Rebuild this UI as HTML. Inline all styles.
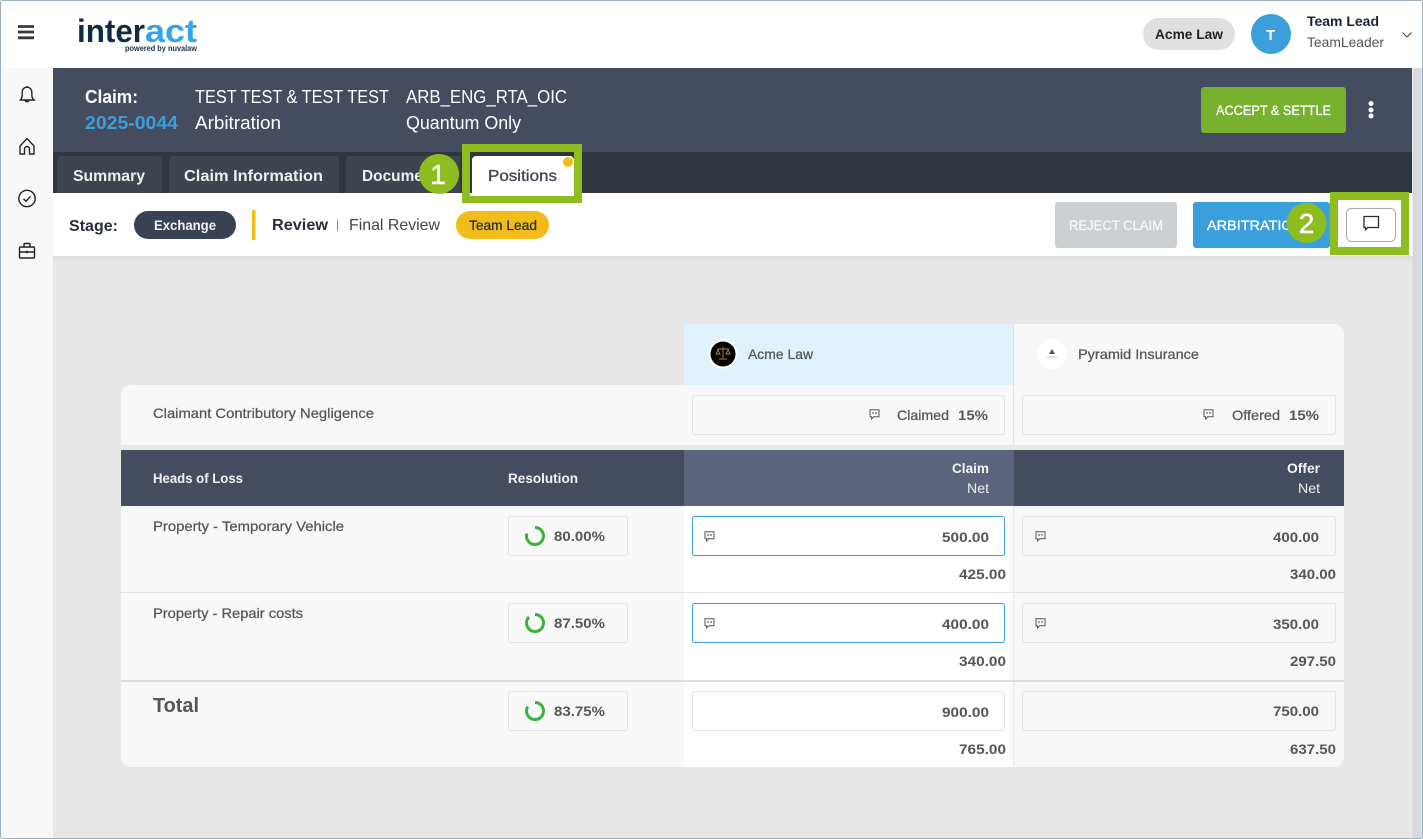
<!DOCTYPE html>
<html lang="en"><head><meta charset="utf-8"><title>Positions</title>
<style>
html,body{margin:0;padding:0;background:#fff;width:1423px;height:839px;overflow:hidden}
svg{display:block}
text{font-family:"Liberation Sans",sans-serif;white-space:pre}
.b{font-weight:700}
.g{fill:#555}
.m{stroke:#555;stroke-width:.25}
.w{stroke:#fff;stroke-width:.3}
</style></head><body>
<svg xmlns="http://www.w3.org/2000/svg" width="1423" height="839" viewBox="0 0 1423 839">
<defs>
<linearGradient id="sh" x1="0" y1="0" x2="0" y2="1"><stop offset="0" stop-color="#dcdcdc"/><stop offset="1" stop-color="#e8e8e8"/></linearGradient>
<symbol id="cm" viewBox="0 0 11 11" overflow="visible"><path d="M1 .8h9v7H4.600L2.600 10V7.800H1z" fill="none" stroke="#555" stroke-width="1"/><path d="M4 3v2M7 3v2" stroke="#555" stroke-width="1.100"/></symbol>
</defs>
<rect width="1423" height="839" fill="#fff"/>
<rect x="0" y="68" width="53" height="771" fill="#f8f8f8"/>
<rect x="53" y="256" width="1360" height="583" fill="#e8e8e8"/>
<rect x="1413" y="68" width="10" height="771" fill="#e9e9e9"/>
<rect x="1412.500" y="68" width="9" height="771" rx="3" fill="#d6d8db"/>
<rect x="53" y="68" width="1359" height="84" fill="#464c5f"/>
<rect x="53" y="152" width="1359" height="41" fill="#30363f"/>
<rect x="53" y="193" width="1359" height="63" fill="#fff"/>
<rect x="53" y="256" width="1359" height="7" fill="url(#sh)"/>

<!-- top bar -->
<path d="M18 26.500h16M18 32h16M18 37.800h16" stroke="#3a3a3a" stroke-width="2.800"/>
<text x="77" y="42" font-size="32" class="b" fill="#0f2c44" textLength="68" lengthAdjust="spacingAndGlyphs">inter</text>
<text x="145" y="42" font-size="32" class="b" fill="#35a4ee" textLength="52" lengthAdjust="spacingAndGlyphs">act</text>
<text x="125" y="51" font-size="8.500" class="b" fill="#1d3347" textLength="72" lengthAdjust="spacingAndGlyphs">powered by nuvalaw</text>
<rect x="1143" y="18" width="92" height="32" rx="16" fill="#e0e0e0"/>
<text x="1155" y="39" font-size="14" class="b" fill="#222" textLength="68" lengthAdjust="spacingAndGlyphs">Acme Law</text>
<circle cx="1271" cy="34" r="20" fill="#3a9fdc"/>
<text x="1266" y="40" font-size="15" class="b" fill="#fff">T</text>
<text x="1307" y="26" font-size="14" class="b" fill="#1a2233" textLength="72" lengthAdjust="spacingAndGlyphs">Team Lead</text>
<text x="1307" y="47" font-size="14" fill="#555" textLength="77" lengthAdjust="spacingAndGlyphs">TeamLeader</text>
<path d="M1402.500 32.500l4.500 4.500 4.500-4.500" fill="none" stroke="#444" stroke-width="1.100"/>

<!-- sidebar icons -->
<g fill="none" stroke="#222" stroke-width="1.400">
<path d="M20.500 100h13.500c-1.800-1.500-2.200-3-2.200-5.500v-2.500a4.800 4.800 0 0 0-9.600 0v2.500c0 2.500-.4 4-1.700 5.500zM25 100.500a2.300 2.300 0 0 0 4 0M27 86v1.500"/>
<path d="M20 146l7-7.500 7 7.500v8h-4.500v-5a2.500 2.500 0 0 0-5 0v5H20z"/>
<circle cx="27" cy="198.500" r="8.200"/><path d="M23.500 198.800l2.500 2.500 4.500-5"/>
<rect x="19.500" y="247" width="15" height="11" rx="1"/><path d="M24 247v-2.500a1 1 0 0 1 1-1h4a1 1 0 0 1 1 1v2.500M19.500 252h15"/><path d="M26.300 252h1.400" stroke-width="2.500"/>
</g>

<!-- claim header -->
<text x="85" y="103" font-size="18" class="b" fill="#fff" textLength="53" lengthAdjust="spacingAndGlyphs">Claim:</text>
<text x="85" y="129" font-size="18" class="b" fill="#3a9fdc" textLength="93" lengthAdjust="spacingAndGlyphs">2025-0044</text>
<text x="195" y="103" font-size="18" fill="#fff" textLength="194" lengthAdjust="spacingAndGlyphs">TEST TEST &amp; TEST TEST</text>
<text x="195" y="129" font-size="18" fill="#fff" textLength="86" lengthAdjust="spacingAndGlyphs">Arbitration</text>
<text x="406" y="103" font-size="18" fill="#fff" textLength="161" lengthAdjust="spacingAndGlyphs">ARB_ENG_RTA_OIC</text>
<text x="406" y="129" font-size="18" fill="#fff" textLength="115" lengthAdjust="spacingAndGlyphs">Quantum Only</text>
<rect x="1201" y="87" width="145" height="46" rx="3" fill="#76b22e"/>
<text x="1216" y="115" font-size="14" fill="#fff" class="w" textLength="115" lengthAdjust="spacingAndGlyphs">ACCEPT &amp; SETTLE</text>
<circle cx="1371" cy="103.500" r="2.500" fill="#fff"/><circle cx="1371" cy="110" r="2.500" fill="#fff"/><circle cx="1371" cy="116" r="2.500" fill="#fff"/>

<!-- tabs -->
<path d="M57 193v-33a4 4 0 0 1 4-4h97a4 4 0 0 1 4 4v33z" fill="#3d444e"/>
<path d="M169 193v-33a4 4 0 0 1 4-4h162a4 4 0 0 1 4 4v33z" fill="#3d444e"/>
<path d="M346 193v-33a4 4 0 0 1 4-4h110v37z" fill="#3d444e"/>
<text x="73" y="181" font-size="16" class="b" fill="#f1f1f1" textLength="72" lengthAdjust="spacingAndGlyphs">Summary</text>
<text x="184" y="181" font-size="16" class="b" fill="#f1f1f1" textLength="139" lengthAdjust="spacingAndGlyphs">Claim Information</text>
<text x="362" y="181" font-size="16" class="b" fill="#f1f1f1" textLength="84" lengthAdjust="spacingAndGlyphs">Documents</text>
<rect x="462" y="144" width="120" height="59" fill="#8ebd20"/>
<rect x="470" y="152" width="104" height="44" fill="#30363f"/>
<path d="M472 196v-36a4 4 0 0 1 4-4h94a4 4 0 0 1 4 4v34h-102z" fill="#fff"/>
<rect x="470" y="193" width="104" height="3" fill="#fff"/>
<text x="488" y="181" font-size="16" fill="#3f4450" stroke="#3f4450" stroke-width=".3" textLength="69" lengthAdjust="spacingAndGlyphs">Positions</text>
<circle cx="568" cy="162" r="5" fill="#f2bd1a"/>
<circle cx="439" cy="174" r="20" fill="#8ebd20"/>
<text x="438" y="184" font-size="28" fill="#fff" stroke="#fff" stroke-width=".5" text-anchor="middle">1</text>

<!-- stage bar -->
<text x="69" y="231" font-size="15.500" class="b" fill="#2a2f3a" textLength="49" lengthAdjust="spacingAndGlyphs">Stage:</text>
<rect x="134" y="211" width="102" height="28" rx="14" fill="#3a4152"/>
<text x="154" y="230" font-size="14" class="b" fill="#f4f4f4" textLength="62" lengthAdjust="spacingAndGlyphs">Exchange</text>
<rect x="252" y="210" width="3.500" height="30" fill="#f2bd1a"/>
<text x="272" y="230" font-size="16" class="b" fill="#2a2f3a" textLength="56" lengthAdjust="spacingAndGlyphs">Review</text>
<rect x="337" y="220" width="1" height="11" fill="#888"/>
<text x="349" y="230" font-size="16" fill="#444" textLength="91" lengthAdjust="spacingAndGlyphs">Final Review</text>
<rect x="456" y="211" width="93" height="28" rx="14" fill="#f2bd1a"/>
<text x="469" y="230" font-size="14" fill="#2a2a2a" stroke="#2a2a2a" stroke-width=".25" textLength="68" lengthAdjust="spacingAndGlyphs">Team Lead</text>
<rect x="1055" y="202" width="122" height="46" rx="3" fill="#cdd0d3"/>
<text x="1069" y="230" font-size="14" fill="#f8f8f8" stroke="#f8f8f8" stroke-width=".3" textLength="94" lengthAdjust="spacingAndGlyphs">REJECT CLAIM</text>
<rect x="1193" y="202" width="137" height="46" rx="3" fill="#3a9fdc"/>
<text x="1207" y="230" font-size="14" fill="#fff" class="w" textLength="96" lengthAdjust="spacingAndGlyphs">ARBITRATION</text>
<circle cx="1306.500" cy="223" r="20" fill="#8ebd20"/>
<text x="1306.500" y="233" font-size="28" fill="#fff" stroke="#fff" stroke-width=".5" text-anchor="middle">2</text>
<rect x="1330" y="192" width="79" height="63" fill="#8ebd20"/>
<rect x="1338" y="200" width="63" height="47" fill="#fff"/>
<rect x="1346.500" y="208.500" width="49" height="33" rx="5" fill="#fff" stroke="#aaa"/>
<path d="M1364 216.500h14.500v11H1368l-2.500 2.300v-2.300H1364z" fill="none" stroke="#222c3a" stroke-width="1.300"/>

<!-- table tops -->
<rect x="684" y="324" width="330" height="61" fill="#e0f2fc"/>
<path d="M1014 324h320a10 10 0 0 1 10 10v51h-330z" fill="#f8f8f8"/>
<rect x="1013" y="324" width="1" height="61" fill="#d9e2e8"/>
<circle cx="723" cy="354" r="14.500" fill="#fff"/><circle cx="723" cy="354" r="12.500" fill="#050505"/>
<path d="M717 349h12M723 347v11M718 350l-2 4h4zM728 350l-2 4h4zM719 359h8" stroke="#a5873a" fill="none" stroke-width=".9"/>
<circle cx="1052" cy="354" r="15" fill="#fff"/>
<path d="M1052 349l-3 5h6z" fill="#555"/><rect x="1047" y="356.500" width="10" height="1" fill="#bbb"/>
<text x="748" y="359" font-size="14" class="g m" textLength="65" lengthAdjust="spacingAndGlyphs">Acme Law</text>
<text x="1078" y="359" font-size="14" class="g m" textLength="121" lengthAdjust="spacingAndGlyphs">Pyramid Insurance</text>

<!-- negligence -->
<path d="M131 385h1213v60H121v-50a10 10 0 0 1 10-10z" fill="#f8f8f8"/>
<rect x="1013" y="385" width="1" height="60" fill="#e3e3e3"/>
<text x="153" y="418" font-size="14" class="g m" textLength="221" lengthAdjust="spacingAndGlyphs">Claimant Contributory Negligence</text>
<rect x="692.500" y="395.500" width="312" height="39" rx="2" fill="#f8f8f8" stroke="#e3e3e3"/>
<rect x="1022.500" y="395.500" width="313" height="39" rx="2" fill="#f8f8f8" stroke="#e3e3e3"/>
<use href="#cm" x="869" y="409" width="11" height="11"/>
<use href="#cm" x="1203" y="409" width="11" height="11"/>
<text x="897" y="420" font-size="14" class="g m" textLength="52" lengthAdjust="spacingAndGlyphs">Claimed</text>
<text x="958" y="420" font-size="14" class="b g" textLength="30" lengthAdjust="spacingAndGlyphs">15%</text>
<text x="1232" y="420" font-size="14" class="g m" textLength="48" lengthAdjust="spacingAndGlyphs">Offered</text>
<text x="1289" y="420" font-size="14" class="b g" textLength="30" lengthAdjust="spacingAndGlyphs">15%</text>

<!-- head row -->
<rect x="121" y="450" width="1223" height="56" fill="#464c5f"/>
<rect x="684" y="450" width="330" height="56" fill="#5b647c"/>
<text x="153" y="483" font-size="14" class="b" fill="#f4f4f4" textLength="90" lengthAdjust="spacingAndGlyphs">Heads of Loss</text>
<text x="508" y="483" font-size="14" class="b" fill="#f4f4f4" textLength="70" lengthAdjust="spacingAndGlyphs">Resolution</text>
<text x="952" y="473" font-size="14" class="b" fill="#f4f4f4" textLength="37" lengthAdjust="spacingAndGlyphs">Claim</text>
<text x="967" y="493" font-size="14" fill="#f0f0f0" textLength="22" lengthAdjust="spacingAndGlyphs">Net</text>
<text x="1287" y="473" font-size="14" class="b" fill="#f4f4f4" textLength="33" lengthAdjust="spacingAndGlyphs">Offer</text>
<text x="1298" y="493" font-size="14" fill="#f0f0f0" textLength="22" lengthAdjust="spacingAndGlyphs">Net</text>

<!-- body -->
<path d="M121 506h563v261H131a10 10 0 0 1-10-10z" fill="#f8f8f8"/>
<rect x="684" y="506" width="330" height="261" fill="#fff"/>
<path d="M1014 506h330v251a10 10 0 0 1-10 10h-320z" fill="#f7f7f7"/>
<rect x="1013" y="506" width="1" height="261" fill="#e8e8e8"/>
<rect x="121" y="592" width="1223" height="1" fill="#e3e3e3"/>
<rect x="121" y="680" width="1223" height="2" fill="#dcdcdc"/>

<text x="153" y="531" font-size="14" class="g m" textLength="191" lengthAdjust="spacingAndGlyphs">Property - Temporary Vehicle</text>
<text x="153" y="618" font-size="14" class="g m" textLength="150" lengthAdjust="spacingAndGlyphs">Property - Repair costs</text>
<text x="153" y="712" font-size="20" class="b g" textLength="46" lengthAdjust="spacingAndGlyphs">Total</text>

<!-- resolution -->
<g fill="#f8f8f8" stroke="#e3e3e3">
<rect x="508.500" y="516.500" width="119" height="39" rx="2"/>
<rect x="508.500" y="603.500" width="119" height="39" rx="2"/>
<rect x="508.500" y="691.500" width="119" height="39" rx="2"/>
</g>
<g fill="none" stroke-width="3" stroke="#3cb03c">
<circle cx="535" cy="536" r="8.500" stroke="#fff"/>
<circle cx="535" cy="623" r="8.500" stroke="#fff"/>
<circle cx="535" cy="711" r="8.500" stroke="#fff"/>
<circle cx="535" cy="536" r="8.500" pathLength="100" stroke-dasharray="80 100" transform="rotate(-90 535 536)"/>
<circle cx="535" cy="623" r="8.500" pathLength="100" stroke-dasharray="87.500 100" transform="rotate(-90 535 623)"/>
<circle cx="535" cy="711" r="8.500" pathLength="100" stroke-dasharray="83.750 100" transform="rotate(-90 535 711)"/>
</g>
<text x="554" y="541" font-size="14" class="b g" textLength="51" lengthAdjust="spacingAndGlyphs">80.00%</text>
<text x="554" y="628" font-size="14" class="b g" textLength="51" lengthAdjust="spacingAndGlyphs">87.50%</text>
<text x="554" y="716" font-size="14" class="b g" textLength="51" lengthAdjust="spacingAndGlyphs">83.75%</text>

<!-- inputs -->
<rect x="692.500" y="516.500" width="312" height="39" rx="2" fill="#fff" stroke="#3a9fdc"/>
<rect x="692.500" y="603.500" width="312" height="39" rx="2" fill="#fff" stroke="#3a9fdc"/>
<rect x="692.500" y="691.500" width="312" height="39" rx="2" fill="#fff" stroke="#e3e3e3"/>
<g fill="#f7f7f7" stroke="#e3e3e3">
<rect x="1022.500" y="516.500" width="313" height="39" rx="2"/>
<rect x="1022.500" y="603.500" width="313" height="39" rx="2"/>
<rect x="1022.500" y="691.500" width="313" height="39" rx="2"/>
</g>
<use href="#cm" x="704" y="531" width="11" height="11"/>
<use href="#cm" x="1035" y="531" width="11" height="11"/>
<use href="#cm" x="704" y="618" width="11" height="11"/>
<use href="#cm" x="1035" y="618" width="11" height="11"/>

<g font-size="14" class="b">
<text x="942" y="542" class="b g" font-size="14" textLength="47" lengthAdjust="spacingAndGlyphs">500.00</text>
<text x="1273" y="542" class="b g" font-size="14" textLength="46" lengthAdjust="spacingAndGlyphs">400.00</text>
<text x="959" y="579" class="b g" font-size="14" textLength="47" lengthAdjust="spacingAndGlyphs">425.00</text>
<text x="1290" y="579" class="b g" font-size="14" textLength="46" lengthAdjust="spacingAndGlyphs">340.00</text>
<text x="942" y="629" class="b g" font-size="14" textLength="47" lengthAdjust="spacingAndGlyphs">400.00</text>
<text x="1273" y="629" class="b g" font-size="14" textLength="46" lengthAdjust="spacingAndGlyphs">350.00</text>
<text x="959" y="666" class="b g" font-size="14" textLength="47" lengthAdjust="spacingAndGlyphs">340.00</text>
<text x="1290" y="666" class="b g" font-size="14" textLength="46" lengthAdjust="spacingAndGlyphs">297.50</text>
<text x="942" y="717" class="b g" font-size="14" textLength="47" lengthAdjust="spacingAndGlyphs">900.00</text>
<text x="1273" y="716" class="b g" font-size="14" textLength="46" lengthAdjust="spacingAndGlyphs">750.00</text>
<text x="959" y="754" class="b g" font-size="14" textLength="47" lengthAdjust="spacingAndGlyphs">765.00</text>
<text x="1290" y="754" class="b g" font-size="14" textLength="46" lengthAdjust="spacingAndGlyphs">637.50</text>
</g>

<!-- window frame -->
<rect x=".5" y=".5" width="1422" height="838" rx="2" fill="none" stroke="#9db0bf"/>
</svg>
</body></html>
